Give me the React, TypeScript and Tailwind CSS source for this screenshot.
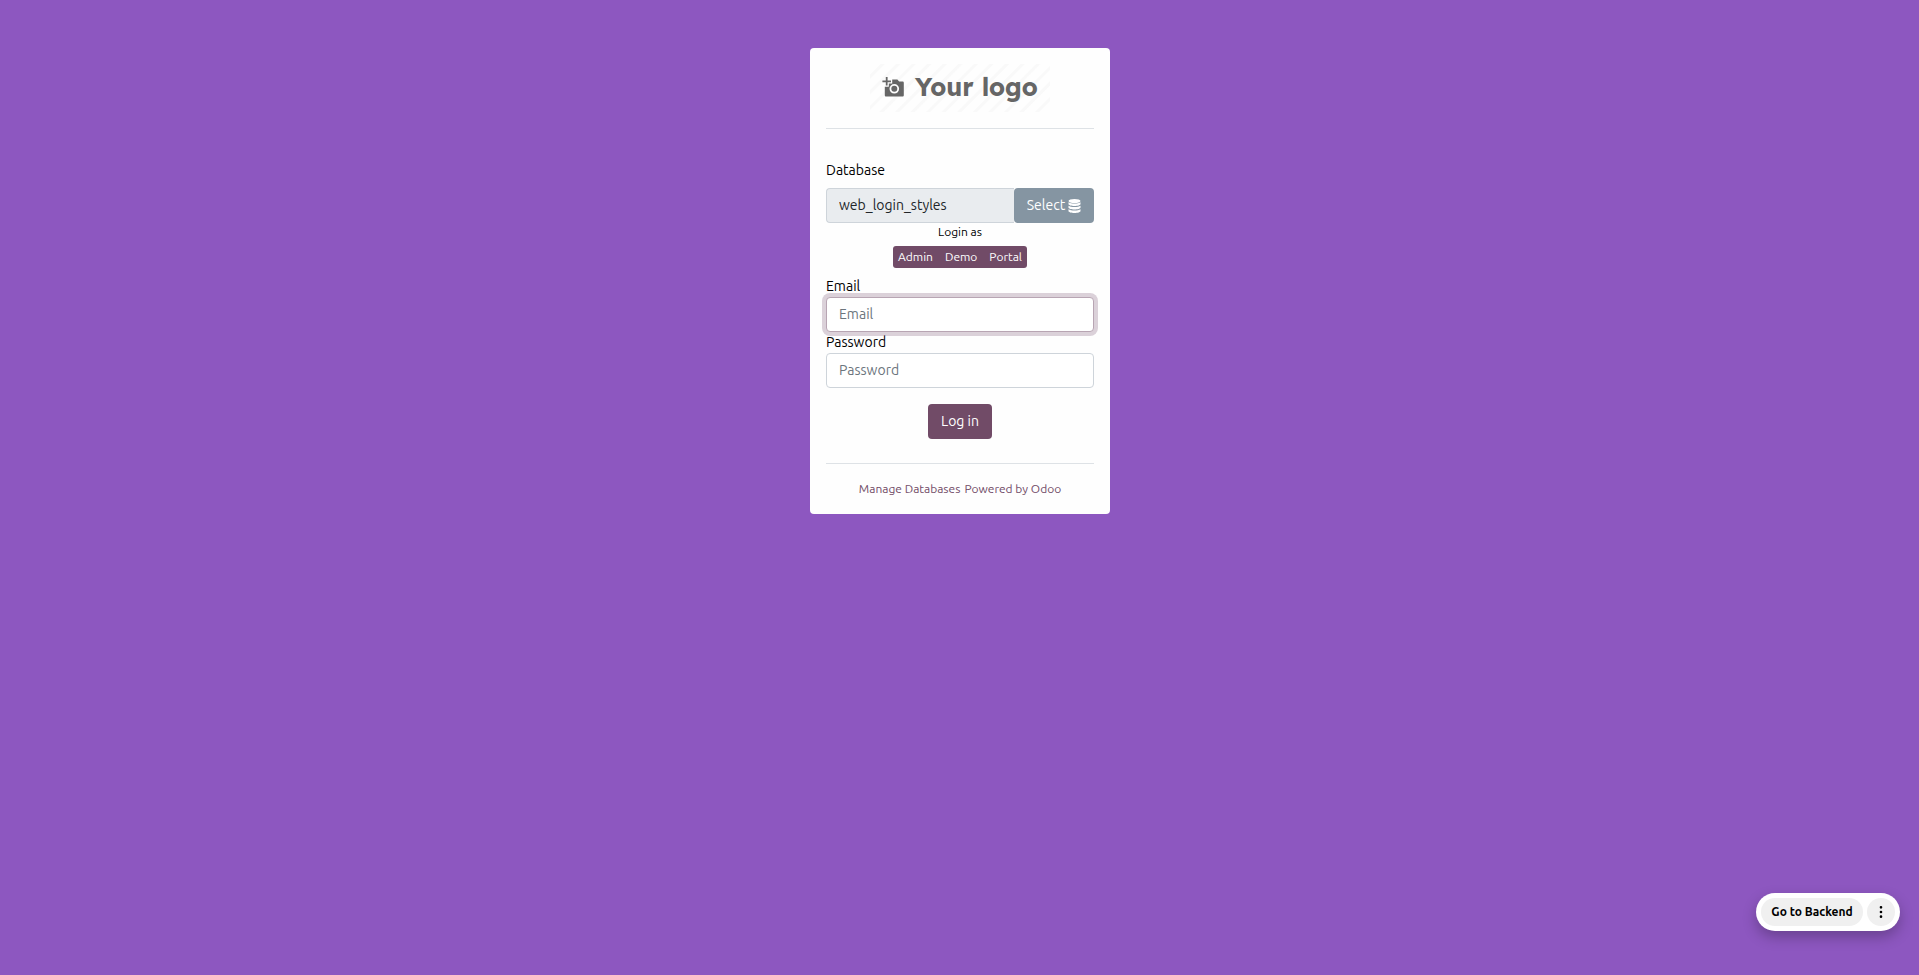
import { MoreVertical } from "lucide-react";

const control =
  "block h-[35px] w-full min-w-0 border px-3 pb-[2px] text-sm leading-[21px] outline-none";

function Logo() {
  return (
    <div className="flex h-12 w-[180px] items-center bg-[repeating-linear-gradient(135deg,#fefefe_0px,#fefefe_7px,#f9f9f9_8px,#f9f9f9_10px,#fefefe_11px)] pb-[2px] pl-3 font-['Lexend','Montserrat',sans-serif] text-[#666]">
      <svg viewBox="0 0 22 20" className="h-5 w-[22px] shrink-0" aria-hidden="true">
        <path fill="#666" d="M3.800 0h1.800v3.400H9v1.800H5.600v3.400H3.800V5.200H.4V3.400h3.400z" />
        <path
          fill="#666"
          fillRule="evenodd"
          d="M10.200 2.500h5.200l1.700 2h3.400c.8 0 1.300.5 1.300 1.300v12.400c0 .8-.5 1.300-1.300 1.300H4.100c-.8 0-1.300-.5-1.300-1.300V9.700h4V6.400h3.400zM12.300 7a4.800 4.800 0 1 0 0 9.600 4.800 4.800 0 0 0 0-9.600zM12.300 8.800a3 3 0 1 1 0 6 3 3 0 0 1 0-6z"
        />
      </svg>
      <span className="ml-[11px] whitespace-nowrap text-[25px] font-bold leading-8">Your logo</span>
    </div>
  );
}

export default function App() {
  return (
    <div className="min-h-screen bg-[#8d57c0] pl-[17px] pr-4 pt-12 font-['Ubuntu','Noto_Sans',sans-serif] text-sm leading-[21px] text-black">
      <main className="mx-auto w-full max-w-[300px] rounded bg-[#fefefe] p-4">
        <header className="flex justify-center border-b border-[#dee2e6] pb-4">
          <Logo />
        </header>
        <form className="flex flex-col pt-[31px]" onSubmit={(e) => e.preventDefault()}>
          <label htmlFor="db" className="pb-[7px]">Database</label>
          <div className="flex">
            <input
              id="db"
              readOnly
              defaultValue="web_login_styles"
              className={`${control} flex-1 rounded-l border-r-0 border-[#ced4da] bg-[#e9ecef] text-[#212529]`}
            />
            <button type="button" className="flex h-[35px] w-20 items-center justify-center gap-[3px] rounded bg-[#8595a2] text-white">
              Select
              <svg viewBox="0 0 13 14" className="h-[14px] w-[13px]" fill="currentColor" aria-hidden="true">
                <ellipse cx="6.500" cy="2" rx="6" ry="2" />
                <path d="M.5 3.300c1.200.9 3.500 1.300 6 1.300s4.800-.4 6-1.300V5c0 1.100-2.700 2-6 2s-6-.9-6-2zM.5 6.700c1.200.9 3.500 1.300 6 1.300s4.800-.4 6-1.300v1.700c0 1.100-2.700 2-6 2s-6-.9-6-2zM.5 10.200c1.200.9 3.500 1.300 6 1.300s4.800-.4 6-1.300V12c0 1.100-2.700 2-6 2s-6-.9-6-2z" />
              </svg>
            </button>
          </div>
          <div className="flex flex-col items-center pb-2 text-xs">
            <span className="leading-[18px]">Login as</span>
            <div className="mt-[5px] flex h-[22px] w-[134px] items-center justify-between rounded-[3px] bg-[#714b67] px-[5px] text-white">
              <button type="button">Admin</button>
              <button type="button">Demo</button>
              <button type="button">Portal</button>
            </div>
          </div>
          <label htmlFor="email">Email</label>
          <input
            id="email"
            type="email"
            placeholder="Email"
            className={`${control} rounded border-[#b8a5b3] bg-white shadow-[0_0_0_4px_#dbd1d9] placeholder:text-[#6c757d]`}
          />
          <label htmlFor="password">Password</label>
          <input
            id="password"
            type="password"
            placeholder="Password"
            className={`${control} rounded border-[#ced4da] bg-white placeholder:text-[#6c757d]`}
          />
          <button type="submit" className="mt-4 h-[35px] w-16 self-center rounded bg-[#714b67] text-white">
            Log in
          </button>
        </form>
        <footer className="mt-6 flex justify-center gap-1 whitespace-nowrap border-t border-[#dee2e6] pt-4 text-xs leading-[18px] text-[#714b67]">
          <a href="#databases">Manage Databases</a>
          <a href="#odoo">Powered by Odoo</a>
        </footer>
      </main>
      <div className="fixed bottom-11 right-[19px] flex h-[38px] items-center gap-1 rounded-full bg-white px-[5px] shadow-[0_6px_14px_rgba(0,0,0,0.25)]">
        <button type="button" className="h-7 w-[102px] whitespace-nowrap rounded-full bg-[#f0f0f0] text-xs font-bold">
          Go to Backend
        </button>
        <button type="button" aria-label="More options" className="flex size-7 items-center justify-center rounded-full bg-[#f0f0f0]">
          <MoreVertical className="size-4" strokeWidth={2} />
        </button>
      </div>
    </div>
  );
}
